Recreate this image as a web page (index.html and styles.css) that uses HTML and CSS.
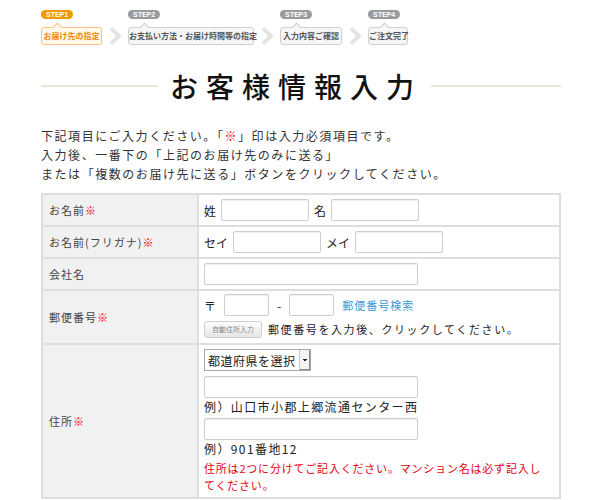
FILE: index.html
```html
<!DOCTYPE html>
<html lang="ja">
<head>
<meta charset="utf-8">
<title>お客様情報入力</title>
<link rel="stylesheet" href="styles.css">
</head>
<body>
<div class="page">
  <ol class="steps">
    <li class="step step-1 current"><span class="badge">STEP1</span><span class="box">お届け先の指定</span></li>
    <li class="chev"><svg width="14" height="18" viewBox="0 0 14 18"><polyline points="3,1 11,9 3,17" fill="none" stroke="#e3e3e3" stroke-width="4"/></svg></li>
    <li class="step step-2"><span class="badge">STEP2</span><span class="box">お支払い方法・お届け時間等の指定</span></li>
    <li class="chev"><svg width="14" height="18" viewBox="0 0 14 18"><polyline points="3,1 11,9 3,17" fill="none" stroke="#e3e3e3" stroke-width="4"/></svg></li>
    <li class="step step-3"><span class="badge">STEP3</span><span class="box">入力内容ご確認</span></li>
    <li class="chev"><svg width="14" height="18" viewBox="0 0 14 18"><polyline points="3,1 11,9 3,17" fill="none" stroke="#e3e3e3" stroke-width="4"/></svg></li>
    <li class="step step-4"><span class="badge">STEP4</span><span class="box">ご注文完了</span></li>
  </ol>

  <h1 class="title"><span class="rule rule-left"></span><span class="title-text">お客様情報入力</span><span class="rule rule-right"></span></h1>

  <p class="intro">下記項目にご入力ください。「<span class="req">※</span>」印は入力必須項目です。<br>入力後、一番下の「上記のお届け先のみに送る」<br>または「複数のお届け先に送る」ボタンをクリックしてください。</p>

  <div class="form">
    <div class="label">お名前<span class="req">※</span></div>
    <div class="value line">
      <span class="tag">姓</span><input class="field short" type="text">
      <span class="tag">名</span><input class="field short" type="text">
    </div>

    <div class="label">お名前(フリガナ)<span class="req">※</span></div>
    <div class="value line">
      <span class="tag">セイ</span><input class="field short" type="text">
      <span class="tag">メイ</span><input class="field short" type="text">
    </div>

    <div class="label">会社名</div>
    <div class="value line">
      <input class="field long" type="text">
    </div>

    <div class="label">郵便番号<span class="req">※</span></div>
    <div class="value zipcell">
      <div class="line zip">
        <span class="tag">〒</span><input class="field zipbox" type="text">
        <span class="tag">-</span><input class="field zipbox" type="text">
        <a class="link" href="#">郵便番号検索</a>
      </div>
      <div class="line autoline">
        <button class="auto" type="button">自動住所入力</button>
        <span class="note">郵便番号を入力後、クリックしてください。</span>
      </div>
    </div>

    <div class="label">住所<span class="req">※</span></div>
    <div class="value addr">
      <span class="selectwrap"><select class="pref"><option>都道府県を選択</option></select></span>
      <input class="field long a1" type="text">
      <div class="example">例）山口市小郡上郷流通センター西</div>
      <input class="field long a2" type="text">
      <div class="example">例）901番地12</div>
      <p class="warn">住所は2つに分けてご記入ください。マンション名は必ず記入し<br>てください。</p>
    </div>
  </div>
</div>
</body>
</html>
```

FILE: styles.css
```css
html, body {
  margin: 0;
  background: #fff;
}

body {
  font-family: "Noto Sans CJK JP", "Noto Sans", sans-serif;
  color: #333;
}

.page {
  width: 520px;
  margin-left: 41px;
  padding-top: 10px;
}

/* ---------- steps ---------- */
.steps {
  list-style: none;
  margin: 0;
  padding: 0;
  display: flex;
  align-items: flex-end;
  gap: 6px;
}

.step {
  display: flex;
  flex-direction: column;
  align-items: flex-start;
  gap: 8px;
}

.badge {
  display: block;
  height: 9px;
  line-height: 9px;
  padding: 0 5px;
  border-radius: 5px;
  background: #9b9b9b;
  color: #fff;
  font-family: "Liberation Sans", Arial, sans-serif;
  font-size: 7px;
  font-weight: bold;
}

.box {
  position: relative;
  display: block;
  box-sizing: border-box;
  height: 18px;
  line-height: 16px;
  border: 1px solid #cfcfcf;
  border-radius: 3px;
  background: #f6f6f6;
  color: #555;
  font-size: 8px;
  font-weight: bold;
  text-align: center;
  white-space: nowrap;
}

.box::before {
  content: "";
  position: absolute;
  left: 12px;
  top: -4px;
  width: 6px;
  height: 6px;
  background: inherit;
  border-top: 1px solid #cfcfcf;
  border-left: 1px solid #cfcfcf;
  transform: rotate(45deg);
}

.current .badge { background: #f39800; }
.current .box {
  background: #fff8ec;
  border-color: #f7c47e;
  color: #ef8a00;
}
.current .box::before {
  border-color: #f7c47e;
}

.step-1 .box { width: 61px; }
.step-2 .box { width: 126px; }
.step-3 .box { width: 62px; }
.step-4 .box { width: 40px; }

.chev {
  display: flex;
  height: 18px;
  align-items: center;
}

/* ---------- title ---------- */
.title {
  margin: 21px 0 0;
  display: flex;
  align-items: center;
  font-weight: normal;
}

.rule {
  height: 2px;
  background: #ece4d8;
}

.rule-left {
  flex: none;
  width: 117px;
}

.rule-right {
  flex: 1;
}

.title-text {
  font-size: 28px;
  line-height: 40px;
  letter-spacing: 8px;
  margin: 0 9px 0 12px;
  font-weight: 500;
  color: #111;
}

/* ---------- intro ---------- */
.intro {
  margin: 20px 0 0;
  font-size: 12px;
  line-height: 19px;
  letter-spacing: 1.55px;
  color: #333;
}

.req {
  color: #e60012;
}

/* ---------- form grid ---------- */
.form {
  margin-top: 10px;
  display: grid;
  grid-template-columns: 154px 1fr;
  gap: 2px;
  padding: 2px;
  background: #dedede;
}

.label {
  background: #f1f1f1;
  display: flex;
  align-items: center;
  padding: 0 6px;
  font-size: 11px;
  letter-spacing: 1px;
  color: #444;
}

.value {
  background: #fff;
  padding: 4px 5px;
  font-size: 12px;
  letter-spacing: 1px;
  color: #222;
}

.line {
  display: flex;
  align-items: center;
  gap: 5px;
}

.tag {
  letter-spacing: 0;
}

.field {
  box-sizing: border-box;
  height: 22px;
  margin: 0;
  border: 1px solid #cdcdcd;
  border-radius: 2px;
  box-shadow: inset 0 1px 1px rgba(0, 0, 0, 0.06);
  background: #fff;
}

.short { width: 88px; }
.long { width: 214px; }
.zipbox { width: 45px; }

.zipcell {
  padding: 3px 5px 4px;
}

.zip {
  gap: 8px;
}

.link {
  color: #3b9ad6;
  text-decoration: none;
  font-size: 11px;
  letter-spacing: 1px;
}

.autoline {
  margin-top: 3px;
  height: 20px;
  gap: 6px;
}

.auto {
  box-sizing: border-box;
  width: 58px;
  height: 17px;
  padding: 0;
  border: 1px solid #cfcfcf;
  border-radius: 3px;
  background: linear-gradient(#fdfdfd, #e6e6e6);
  color: #888;
  font-family: "Noto Sans CJK JP", sans-serif;
  font-size: 7px;
  letter-spacing: 0;
}

.note {
  font-size: 11px;
  letter-spacing: 1.6px;
}

/* ---------- address ---------- */
.addr {
  padding: 4px 5px 3px;
  display: flex;
  flex-direction: column;
  align-items: flex-start;
}

.selectwrap {
  position: relative;
  display: block;
  height: 22px;
}

.selectwrap::after {
  content: "";
  position: absolute;
  right: 1px;
  top: 1px;
  box-sizing: border-box;
  width: 11px;
  height: 20px;
  border-left: 1px solid #c8c8c8;
  border-right: 1px solid #8a8a8a;
  border-bottom: 1px solid #8a8a8a;
  background:
    linear-gradient(#222, #222) center 9px / 4px 1px no-repeat,
    linear-gradient(#222, #222) center 10px / 2px 1px no-repeat,
    #f4f4f4;
  pointer-events: none;
}

.pref {
  display: block;
  -webkit-appearance: none;
  appearance: none;
  box-sizing: border-box;
  height: 22px;
  margin: 0;
  padding: 0 14px 0 3px;
  border: 1px solid #a9a9a9;
  border-radius: 0;
  background: #fff;
  color: #222;
  font-family: "Noto Sans CJK JP", sans-serif;
  font-size: 12px;
  letter-spacing: 0.5px;
}

.a1 { margin-top: 5px; }
.a2 { margin-top: 2px; }

.example {
  line-height: 18px;
  letter-spacing: 1.4px;
}

.warn {
  margin: 2px 0 0;
  font-size: 11px;
  line-height: 17px;
  letter-spacing: 0.8px;
  color: #e60012;
}
```
